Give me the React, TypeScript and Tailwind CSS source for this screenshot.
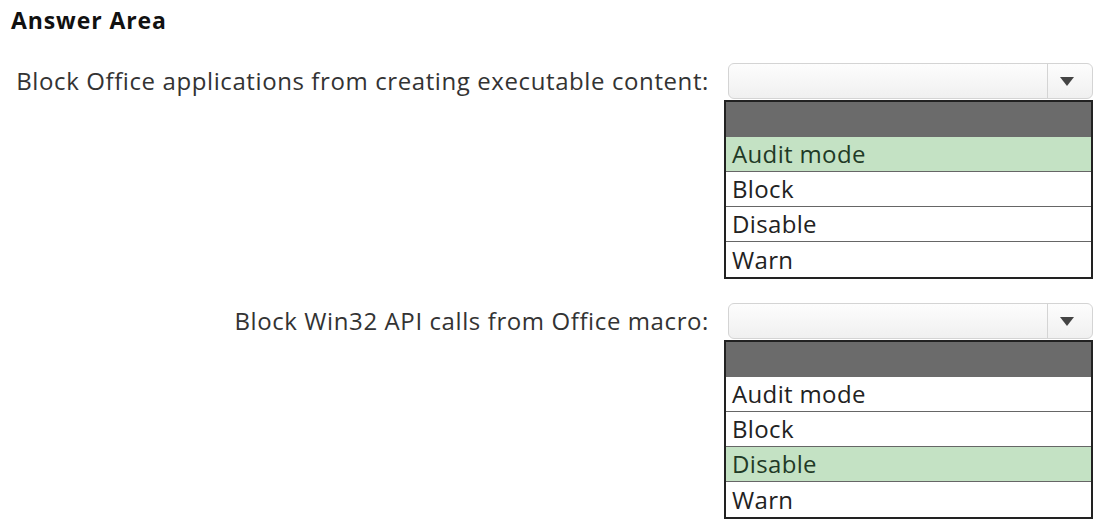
import React from "react";

const Row = ({ label, options, selected }: { label: string; options: string[]; selected: number }) => (
  <div className="flex items-start">
    <div className="w-[709px] text-right h-[36px] flex items-center justify-end text-[24px] tracking-[0.6px] text-[#333] whitespace-nowrap">
      {label}
    </div>
    <div className="ml-[15px] w-[369px] flex flex-col">
      <div className="ml-[4px] w-[365px] h-[36px] rounded-[6px] border border-[#d4d4d4] bg-gradient-to-b from-[#fdfdfd] to-[#f0f0f0] flex">
        <div className="flex-1" />
        <div className="w-[45px] border-l border-[#d4d4d4] flex items-center justify-center pr-[6px]">
          <svg width="14" height="9" viewBox="0 0 14 9"><path d="M0 0 H14 L7 9 Z" fill="#444" /></svg>
        </div>
      </div>
      <div className="mt-[1px] border-2 border-[#222] bg-white">
        <div className="h-[35px] bg-[#6b6b6b]" />
        {options.map((o, i) => (
          <div
            key={o}
            className={`h-[35px] flex items-center pl-[6px] text-[24px] tracking-[0.35px] leading-none ${i < options.length - 1 ? "border-b border-[#666]" : ""} ${i === selected ? "bg-[#c4e2c4] text-[#1f3a26]" : "text-[#222]"}`}
          >
            {o}
          </div>
        ))}
      </div>
    </div>
  </div>
);

export default function App() {
  const opts = ["Audit mode", "Block", "Disable", "Warn"];
  return (
    <div className="w-[1102px] h-[525px] bg-white font-['Open_Sans',sans-serif] relative overflow-hidden">
      <div className="pt-[5px] pl-[11px] text-[23px] leading-[30px] tracking-[0.9px] font-bold text-[#111]">Answer Area</div>
      <div className="mt-[28px]">
        <Row label="Block Office applications from creating executable content:" options={opts} selected={0} />
      </div>
      <div className="mt-[24px]">
        <Row label="Block Win32 API calls from Office macro:" options={opts} selected={2} />
      </div>
    </div>
  );
}
